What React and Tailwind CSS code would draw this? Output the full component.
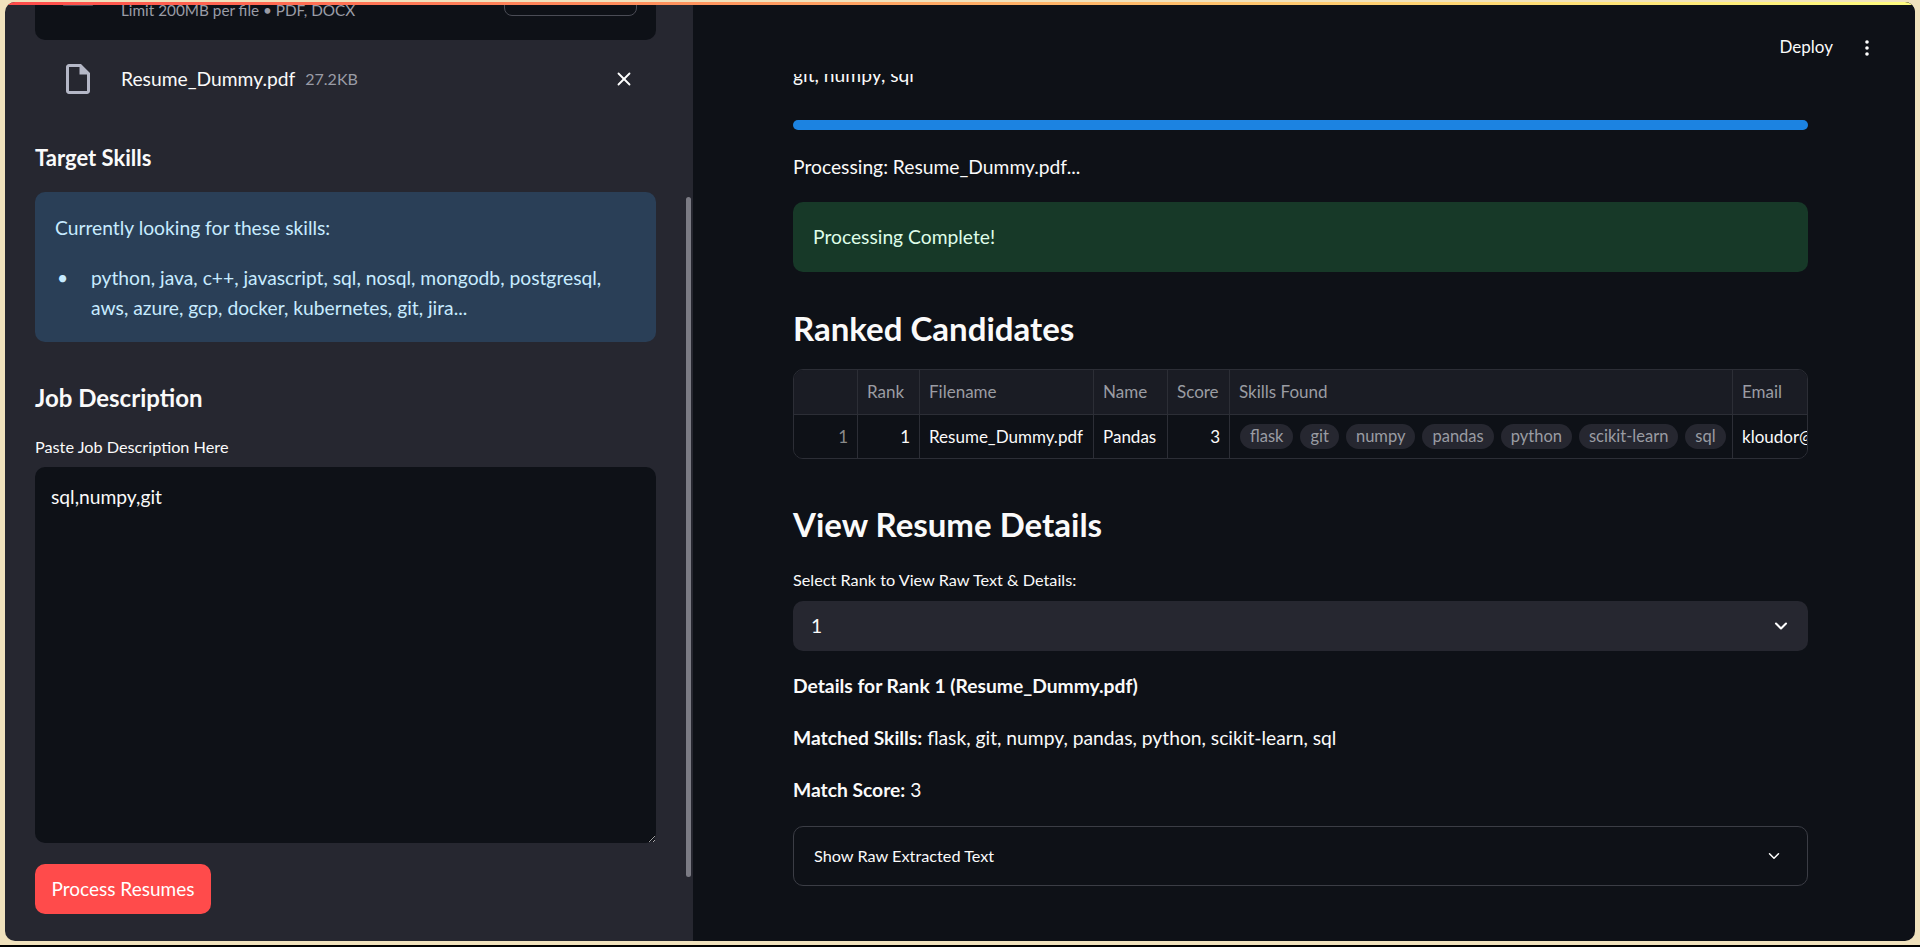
import { ChevronDown, X } from 'lucide-react';

const skills = ['flask', 'git', 'numpy', 'pandas', 'python', 'scikit-learn', 'sql'];

function FileIcon() {
  return (
    <svg viewBox="0 0 24 24" className="h-9 w-9 text-[#b4b7c6] fill-current">
      <path d="M14 2H6c-1.1 0-1.99.9-1.99 2L4 20c0 1.1.89 2 1.99 2H18c1.1 0 2-.9 2-2V8l-6-6zM6 20V4h7v5h5v11H6z" />
    </svg>
  );
}

function Sidebar() {
  return (
    <aside className="relative w-[688px] shrink-0 overflow-hidden bg-[#262730] pl-[30px] pr-[37px]">
      {/* Upload box, scrolled mostly out of view */}
      <div className="-mt-[30px] flex h-[68px] items-end justify-between rounded-b-[10px] bg-[#0e1117] pb-[20px] pl-[86px] pr-[19px]">
        <span className="text-[15.3px] leading-[20px] text-[#9a9ca6]">Limit 200MB per file • PDF, DOCX</span>
        <div className="mb-[4px] h-[40px] w-[133px] rounded-[8px] border border-[#4a4c55]" />
      </div>
      {/* Bottom edge of the upload icon */}
      <div className="absolute left-[58px] top-[3px] h-[1px] w-[30px] rounded bg-[#4a4c55]" />

      {/* Uploaded file */}
      <div className="mt-[1px] flex h-[76px] items-center pl-[25px] pr-[21px]">
        <FileIcon />
        <span className="ml-[25px] text-[19.25px] text-[#fafafa]">Resume_Dummy.pdf</span>
        <span className="ml-[10px] text-[16px] text-[#9a9ca6]">27.2KB</span>
        <X className="ml-auto h-[22px] w-[22px] text-white" strokeWidth={2} />
      </div>

      <h3 className="mt-[27px] text-[22px] font-bold leading-[28px] text-[#fafafa]">Target Skills</h3>

      <div className="mt-[20px] h-[150px] rounded-[10px] bg-[#2a3f57] pl-[20px] pr-[16px] pt-[21px] text-[19.25px] leading-[30px] text-[#c7ebff]">
        <p>Currently looking for these skills:</p>
        <div className="mt-[20px] flex">
          <span className="w-[36px] shrink-0 pl-[2px]">•</span>
          <p>python, java, c++, javascript, sql, nosql, mongodb, postgresql, aws, azure, gcp, docker, kubernetes, git, jira...</p>
        </div>
      </div>

      <h2 className="mt-[41px] text-[24px] font-bold leading-[30px] text-[#fafafa]">Job Description</h2>
      <label className="mt-[24px] block text-[16.25px] leading-[20px] text-[#fafafa]">Paste Job Description Here</label>
      <textarea
        readOnly
        defaultValue="sql,numpy,git"
        className="mt-[10px] block h-[376px] w-full rounded-[10px] bg-[#0e1117] px-[16px] py-[15px] text-[19.25px] leading-[30px] text-[#fafafa] outline-none"
      />
      <button className="mt-[21px] h-[50px] w-[176px] rounded-[10px] bg-[#ff4b4b] text-[19px] text-white">Process Resumes</button>

      {/* Scrollbar thumb */}
      <div className="absolute right-[2px] top-[195px] h-[680px] w-[5px] rounded-full bg-[#7b7b84]" />
    </aside>
  );
}

function CandidatesTable() {
  return (
    <div className="mt-[21px] h-[90px] overflow-hidden rounded-[10px] border border-[#2c2e36] text-[17px]">
      <div className="flex h-[45px] border-b border-[#2c2e36] bg-[#1a1c24] text-[#9a9ca3]">
        <div className="w-[64px] shrink-0 border-r border-[#2c2e36]" />
        <div className="w-[62px] shrink-0 border-r border-[#2c2e36] px-[9px] leading-[44px]">Rank</div>
        <div className="w-[174px] shrink-0 border-r border-[#2c2e36] px-[9px] leading-[44px]">Filename</div>
        <div className="w-[74px] shrink-0 border-r border-[#2c2e36] px-[9px] leading-[44px]">Name</div>
        <div className="w-[62px] shrink-0 border-r border-[#2c2e36] px-[9px] leading-[44px]">Score</div>
        <div className="w-[503px] shrink-0 border-r border-[#2c2e36] px-[9px] leading-[44px]">Skills Found</div>
        <div className="shrink-0 px-[9px] leading-[44px]">Email</div>
      </div>
      <div className="flex h-[44px] bg-[#0e1117] leading-[43px] text-[#fafafa]">
        <div className="w-[64px] shrink-0 border-r border-[#2c2e36] px-[9px] text-right text-[#8a8a8a]">1</div>
        <div className="w-[62px] shrink-0 border-r border-[#2c2e36] px-[9px] text-right">1</div>
        <div className="w-[174px] shrink-0 border-r border-[#2c2e36] px-[9px] whitespace-nowrap">Resume_Dummy.pdf</div>
        <div className="w-[74px] shrink-0 border-r border-[#2c2e36] px-[9px]">Pandas</div>
        <div className="w-[62px] shrink-0 border-r border-[#2c2e36] px-[9px] text-right">3</div>
        <div className="flex w-[503px] shrink-0 items-center gap-[7px] border-r border-[#2c2e36] pb-[1px] pl-[10px]">
          {skills.map((s) => (
            <span key={s} className="whitespace-nowrap rounded-full bg-[#262730] px-[10px] text-[16.5px] leading-[25px] text-[#9a9ca3]">{s}</span>
          ))}
        </div>
        <div className="min-w-0 flex-1 overflow-hidden whitespace-nowrap pl-[9px]">kloudor@gmail.com</div>
      </div>
    </div>
  );
}

function Main() {
  return (
    <main className="relative min-w-0 flex-1 overflow-hidden bg-[#0e1117] pl-[100px] pr-[107px]">
      <header className="absolute inset-x-0 top-0 z-10 flex h-[72px] items-start justify-end bg-[#0e1117] pr-[46px] pt-[33px]">
        <span className="text-[17px] leading-[24px] text-[#fafafa]">Deploy</span>
        <svg viewBox="0 0 4 16" className="ml-[32px] mt-[5px] h-[16px] w-[4px] fill-white">
          <circle cx="2" cy="2" r="1.8" />
          <circle cx="2" cy="8" r="1.8" />
          <circle cx="2" cy="14" r="1.8" />
        </svg>
      </header>

      <p className="mt-[58px] text-[19.25px] leading-[30px] text-[#fafafa]">git, numpy, sql</p>
      <div className="mt-[30px] h-[10px] rounded-full bg-[#1c83e1]" />
      <p className="mt-[22px] text-[19.25px] leading-[30px] text-[#fafafa]">Processing: Resume_Dummy.pdf...</p>
      <div className="mt-[20px] flex h-[70px] items-center rounded-[10px] bg-[#173928] pl-[20px] text-[19.25px] text-[#dffde9]">Processing Complete!</div>

      <h2 className="mt-[36px] text-[33px] font-bold leading-[40px] text-[#fafafa]">Ranked Candidates</h2>
      <CandidatesTable />

      <h2 className="mt-[45px] text-[33px] font-bold leading-[40px] text-[#fafafa]">View Resume Details</h2>
      <label className="mt-[26px] block text-[16.25px] leading-[20px] text-[#fafafa]">Select Rank to View Raw Text &amp; Details:</label>
      <div className="mt-[11px] flex h-[50px] items-center justify-between rounded-[10px] bg-[#262730] pl-[18px] pr-[17px] text-[19.25px] text-[#fafafa]">
        <span>1</span>
        <ChevronDown className="h-[20px] w-[20px] text-white" strokeWidth={2.5} />
      </div>

      <p className="mt-[20px] text-[19.25px] font-bold leading-[30px] text-[#fafafa]">Details for Rank 1 (Resume_Dummy.pdf)</p>
      <p className="mt-[22px] text-[19.25px] leading-[30px] text-[#fafafa]"><strong className="font-bold">Matched Skills:</strong> flask, git, numpy, pandas, python, scikit-learn, sql</p>
      <p className="mt-[22px] text-[19.25px] leading-[30px] text-[#fafafa]"><strong className="font-bold">Match Score:</strong> 3</p>

      <div className="mt-[21px] flex h-[60px] items-center justify-between rounded-[10px] border border-[#3b3d45] pl-[20px] pr-[24px] text-[16.25px] text-[#fafafa]">
        <span>Show Raw Extracted Text</span>
        <ChevronDown className="h-[18px] w-[18px] text-white" strokeWidth={2} />
      </div>
    </main>
  );
}

export default function App() {
  return (
    <div className="flex h-screen w-full flex-col overflow-hidden bg-[#f0e2bd] font-['Lato',sans-serif]">
      <div className="min-h-0 flex-1 px-[5px] pb-[4px] pt-[2px]">
        <div className="relative flex h-full overflow-hidden rounded-[10px]">
          <div className="absolute inset-x-0 top-0 z-20 h-[3px] bg-gradient-to-r from-[#ff4b4b] to-[#fffd80]" />
          <Sidebar />
          <Main />
        </div>
      </div>
      <div className="h-[2px] shrink-0 bg-black" />
    </div>
  );
}
